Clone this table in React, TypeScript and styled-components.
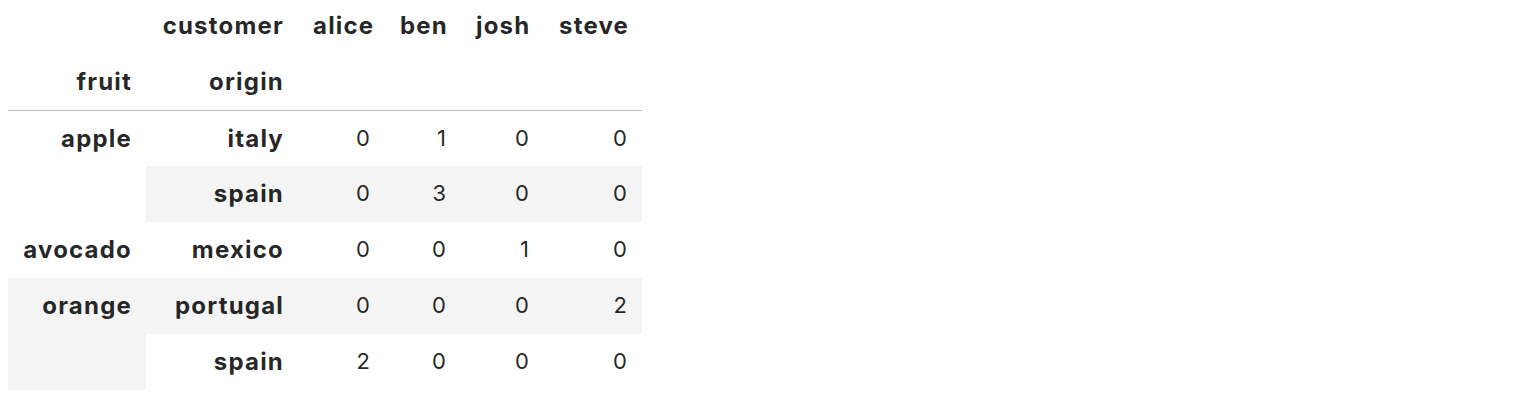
import * as React from 'react';
import styled, { createGlobalStyle } from 'styled-components';

const GlobalStyle = createGlobalStyle`
  body {
    margin: 0 8px;
    background: #ffffff;
    font-family: Inter, "Noto Sans", "Liberation Sans", sans-serif;
    color: rgba(0, 0, 0, 0.87);
  }
`;

const colWidths = [138, 152, 87, 76, 83, 98];

const Frame = styled.table`
  border-collapse: collapse;
  border-spacing: 0;
  table-layout: fixed;
  width: ${colWidths.reduce((a, b) => a + b, 0)}px;
  margin-top: -2px;
  font-size: 22px;
`;

const Head = styled.thead`
  border-bottom: 1px solid #bdbdbd;
`;

const Row = styled.tr<{ $shaded?: boolean }>`
  & > * {
    background: ${(p) => (p.$shaded ? '#f4f4f4' : 'transparent')};
  }
`;

const HeadCell = styled.th`
  padding: 14px 14px 14px 15px;
  line-height: 27.8px;
  font-size: 24px;
  letter-spacing: 1.2px;
  text-align: right;
  vertical-align: middle;
  font-weight: 700;
  white-space: nowrap;
`;

const IndexCell = styled(HeadCell)`
  vertical-align: top;
`;

const ValueCell = styled.td`
  padding: 14px 15px;
  line-height: 27.8px;
  text-align: right;
  vertical-align: middle;
  font-weight: 400;
`;

const customers = ['alice', 'ben', 'josh', 'steve'];

interface Group {
  fruit: string;
  rows: { origin: string; values: number[] }[];
}

const groups: Group[] = [
  {
    fruit: 'apple',
    rows: [
      { origin: 'italy', values: [0, 1, 0, 0] },
      { origin: 'spain', values: [0, 3, 0, 0] },
    ],
  },
  { fruit: 'avocado', rows: [{ origin: 'mexico', values: [0, 0, 1, 0] }] },
  {
    fruit: 'orange',
    rows: [
      { origin: 'portugal', values: [0, 0, 0, 2] },
      { origin: 'spain', values: [2, 0, 0, 0] },
    ],
  },
];

const drawBody = () => {
  let rowIndex = 0;
  return groups.flatMap((group) =>
    group.rows.map((row, i) => {
      rowIndex += 1;
      return (
        <Row key={group.fruit + row.origin} $shaded={rowIndex % 2 === 0}>
          {i === 0 && <IndexCell rowSpan={group.rows.length}>{group.fruit}</IndexCell>}
          <HeadCell>{row.origin}</HeadCell>
          {row.values.map((v, j) => (
            <ValueCell key={j}>{v}</ValueCell>
          ))}
        </Row>
      );
    })
  );
};

export default function App() {
  return (
    <>
      <GlobalStyle />
      <Frame>
        <colgroup>
          {colWidths.map((w, i) => (
            <col key={i} style={{ width: w }} />
          ))}
        </colgroup>
        <Head>
          <Row>
            <HeadCell />
            <HeadCell>customer</HeadCell>
            {customers.map((c) => (
              <HeadCell key={c}>{c}</HeadCell>
            ))}
          </Row>
          <Row>
            <HeadCell>fruit</HeadCell>
            <HeadCell>origin</HeadCell>
            {customers.map((c) => (
              <HeadCell key={c} />
            ))}
          </Row>
        </Head>
        <tbody>{drawBody()}</tbody>
      </Frame>
    </>
  );
}
